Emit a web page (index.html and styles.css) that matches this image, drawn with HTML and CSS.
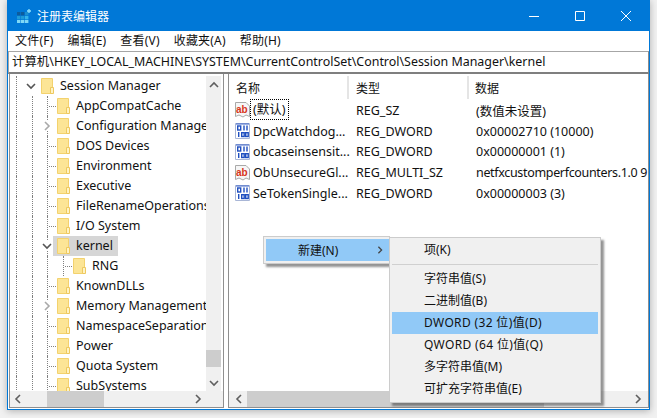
FILE: index.html
```html
<!DOCTYPE html>
<html lang="zh-CN">
<head>
<meta charset="utf-8">
<title>注册表编辑器</title>
<link rel="stylesheet" href="styles.css">
</head>
<body>
<svg class="defs" width="0" height="0" aria-hidden="true">
  <symbol id="folder" viewBox="0 0 13 16">
    <path d="M.5.5H11.5V15.5H.5Z" fill="#fce596" stroke="#f3d26e"/>
    <path d="M9.5 9.5H12.5V15.5H9.5Z" fill="#fff3c4" stroke="#eec95f"/>
  </symbol>
  <symbol id="ab" viewBox="0 0 15 16">
    <path d="M.5 .5H11L14.5 4V14.5L11 13L8 15L4 13L.5 14.5Z" fill="#f6f6f6" stroke="#a9a9a9"/>
    <text x="1" y="11" class="ab-text">ab</text>
  </symbol>
  <symbol id="bin" viewBox="0 0 15 16">
    <path d="M.5 .5H14.5V15.5H.5Z" fill="#fff" stroke="#a9b6d6"/>
    <path d="M1 1H14" stroke="#3a62c8"/>
    <g fill="none" stroke="#1f4fc0" stroke-width="1.4">
      <rect x="2.7" y="3" width="3" height="4"/>
      <path d="M9 2.5V7.5M12 2.5V7.5"/>
      <path d="M3.7 9V14"/>
      <rect x="6.7" y="9.7" width="2.5" height="3.8"/>
      <rect x="10.7" y="9.7" width="2.5" height="3.8"/>
    </g>
  </symbol>
  <symbol id="down" viewBox="0 0 10 10"><path d="M1 3L5 7L9 3" fill="none" stroke="currentColor" stroke-width="1.6"/></symbol>
  <symbol id="up" viewBox="0 0 10 10"><path d="M1 7L5 3L9 7" fill="none" stroke="currentColor" stroke-width="1.6"/></symbol>
  <symbol id="left" viewBox="0 0 10 10"><path d="M7 1L3 5L7 9" fill="none" stroke="currentColor" stroke-width="1.6"/></symbol>
  <symbol id="right" viewBox="0 0 10 10"><path d="M3 1L7 5L3 9" fill="none" stroke="currentColor" stroke-width="1.6"/></symbol>
</svg>

<div class="window">
  <header class="titlebar">
    <svg class="app-icon" width="14" height="14" viewBox="0 0 14 14">
      <rect x="0" y="3" width="3.4" height="3.4" fill="#0e5c9c"/><rect x="4" y="3" width="3.4" height="3.4" fill="#0e5c9c"/><rect x="8" y="3" width="3.4" height="3.4" fill="#1b8fd0"/>
      <rect x="0" y="7" width="3.4" height="3.4" fill="#1f9bd8"/><rect x="4" y="7" width="3.4" height="3.4" fill="#1f9bd8"/><rect x="8" y="7" width="3.4" height="3.4" fill="#34b4ea"/>
      <rect x="0" y="11" width="3.4" height="3" fill="#7fd8f6"/><rect x="4" y="11" width="3.4" height="3" fill="#7fd8f6"/><rect x="8" y="11" width="3.4" height="3" fill="#7fd8f6"/>
      <path d="M12 0V4M10 2H14" stroke="#8fe0fa" stroke-width="1.3"/>
    </svg>
    <span class="title">注册表编辑器</span>
    <div class="controls">
      <svg width="10" height="10" viewBox="0 0 10 10"><path d="M0 5.5H10" stroke="#fff"/></svg>
      <svg width="10" height="10" viewBox="0 0 10 10"><path d="M.5.5H9.5V9.5H.5Z" fill="none" stroke="#fff"/></svg>
      <svg width="10" height="10" viewBox="0 0 10 10"><path d="M0 0L10 10M10 0L0 10" stroke="#fff"/></svg>
    </div>
  </header>

  <nav class="menubar">
    <span>文件(F)</span><span>编辑(E)</span><span>查看(V)</span><span>收藏夹(A)</span><span>帮助(H)</span>
  </nav>

  <div class="address">计算机\HKEY_LOCAL_MACHINE\SYSTEM\CurrentControlSet\Control\Session Manager\kernel</div>

  <div class="panes">
    <section class="pane tree-pane">
      <div class="tree-main">
        <div class="tree-rows">
          <div class="row"><i class="g g-root"></i><svg class="chev dark"><use href="#down"/></svg><span class="node top"><svg class="fold"><use href="#folder"/></svg><span>Session Manager</span></span></div>
          <div class="row"><i class="g"></i><i class="g g2"></i><i class="g g3 stub"></i><span class="node"><svg class="fold"><use href="#folder"/></svg><span>AppCompatCache</span></span></div>
          <div class="row"><i class="g"></i><i class="g g2"></i><span class="ex"><svg class="chev light"><use href="#right"/></svg></span><span class="node"><svg class="fold"><use href="#folder"/></svg><span>Configuration Manager</span></span></div>
          <div class="row"><i class="g"></i><i class="g g2"></i><i class="g g3 stub"></i><span class="node"><svg class="fold"><use href="#folder"/></svg><span>DOS Devices</span></span></div>
          <div class="row"><i class="g"></i><i class="g g2"></i><i class="g g3 stub"></i><span class="node"><svg class="fold"><use href="#folder"/></svg><span>Environment</span></span></div>
          <div class="row"><i class="g"></i><i class="g g2"></i><i class="g g3 stub"></i><span class="node"><svg class="fold"><use href="#folder"/></svg><span>Executive</span></span></div>
          <div class="row"><i class="g"></i><i class="g g2"></i><i class="g g3 stub"></i><span class="node"><svg class="fold"><use href="#folder"/></svg><span>FileRenameOperations</span></span></div>
          <div class="row"><i class="g"></i><i class="g g2"></i><i class="g g3 stub"></i><span class="node"><svg class="fold"><use href="#folder"/></svg><span>I/O System</span></span></div>
          <div class="row"><i class="g"></i><i class="g g2"></i><span class="ex"><svg class="chev dark"><use href="#down"/></svg></span><span class="node selected"><svg class="fold"><use href="#folder"/></svg><span>kernel</span></span></div>
          <div class="row"><i class="g"></i><i class="g g2"></i><i class="g g3 wide"></i><i class="g g3 stub"></i><span class="node"><svg class="fold"><use href="#folder"/></svg><span>RNG</span></span></div>
          <div class="row"><i class="g"></i><i class="g g2"></i><i class="g g3 stub"></i><span class="node"><svg class="fold"><use href="#folder"/></svg><span>KnownDLLs</span></span></div>
          <div class="row"><i class="g"></i><i class="g g2"></i><span class="ex"><svg class="chev light"><use href="#right"/></svg></span><span class="node"><svg class="fold"><use href="#folder"/></svg><span>Memory Management</span></span></div>
          <div class="row"><i class="g"></i><i class="g g2"></i><i class="g g3 stub"></i><span class="node"><svg class="fold"><use href="#folder"/></svg><span>NamespaceSeparation</span></span></div>
          <div class="row"><i class="g"></i><i class="g g2"></i><i class="g g3 stub"></i><span class="node"><svg class="fold"><use href="#folder"/></svg><span>Power</span></span></div>
          <div class="row"><i class="g"></i><i class="g g2"></i><i class="g g3 stub"></i><span class="node"><svg class="fold"><use href="#folder"/></svg><span>Quota System</span></span></div>
          <div class="row"><i class="g"></i><i class="g g2"></i><i class="g g3 stub"></i><span class="node"><svg class="fold"><use href="#folder"/></svg><span>SubSystems</span></span></div>
        </div>
        <div class="vscroll">
          <svg class="arrow"><use href="#up"/></svg>
          <div class="vspace"><div class="vthumb"></div></div>
          <svg class="arrow"><use href="#down"/></svg>
        </div>
        <div class="tree-edge"></div>
      </div>
      <div class="hscroll tree-h">
        <svg class="arrow"><use href="#left"/></svg>
        <div class="hspace"><div class="hthumb"></div></div>
        <svg class="arrow"><use href="#right"/></svg>
      </div>
    </section>

    <section class="pane list-pane">
      <div class="list-main">
        <div class="list-head">
          <span class="c-name">名称</span><span class="c-type">类型</span><span class="c-data">数据</span>
        </div>
        <div class="list-row"><span class="c-name"><svg class="ico"><use href="#ab"/></svg><span class="focus">(默认)</span></span><span class="c-type">REG_SZ</span><span class="c-data">(数值未设置)</span></div>
        <div class="list-row"><span class="c-name"><svg class="ico"><use href="#bin"/></svg><span class="nm">DpcWatchdog...</span></span><span class="c-type">REG_DWORD</span><span class="c-data">0x00002710 (10000)</span></div>
        <div class="list-row"><span class="c-name"><svg class="ico"><use href="#bin"/></svg><span class="nm">obcaseinsensit...</span></span><span class="c-type">REG_DWORD</span><span class="c-data">0x00000001 (1)</span></div>
        <div class="list-row"><span class="c-name"><svg class="ico"><use href="#ab"/></svg><span class="nm">ObUnsecureGl...</span></span><span class="c-type">REG_MULTI_SZ</span><span class="c-data tight">netfxcustomperfcounters.1.0 9</span></div>
        <div class="list-row"><span class="c-name"><svg class="ico"><use href="#bin"/></svg><span class="nm">SeTokenSingle...</span></span><span class="c-type">REG_DWORD</span><span class="c-data">0x00000003 (3)</span></div>
      </div>
      <div class="hscroll list-h">
        <svg class="arrow"><use href="#left"/></svg>
        <div class="hspace"><div class="hthumb"></div></div>
        <svg class="arrow"><use href="#right"/></svg>
      </div>
    </section>
  </div>

  <div class="ctx ctx-main">
    <div class="ctx-new"><span>新建(N)</span><svg class="sub-arrow"><use href="#right"/></svg></div>
  </div>
  <div class="ctx ctx-sub">
    <div class="item">项(K)</div>
    <div class="sep"></div>
    <div class="item">字符串值(S)</div>
    <div class="item">二进制值(B)</div>
    <div class="item hot latin">DWORD (32 位)值(D)</div>
    <div class="item latin">QWORD (64 位)值(Q)</div>
    <div class="item">多字符串值(M)</div>
    <div class="item">可扩充字符串值(E)</div>
  </div>
</div>
</body>
</html>
```

FILE: styles.css
```css
* { box-sizing: border-box; }
html, body { margin: 0; height: 100%; overflow: hidden; }
body {
  background: #f1f1f1;
  font-family: "Noto Sans", "Noto Sans CJK SC", sans-serif;
  font-size: 12.5px;
  color: #111;
}
.defs { position: absolute; }
.ab-text { font: 700 10px "Liberation Sans", sans-serif; fill: #d8341a; }

.window {
  position: relative;
  margin-left: 7px;
  width: 643px;
  height: 410px;
  background: #fff;
  border: 1px solid #0078d7;
  border-top: 0;
  display: flex;
  flex-direction: column;
  box-shadow: 0 1px 7px rgba(0,0,0,.28);
}

.titlebar {
  height: 31px;
  background: #0078d7;
  display: flex;
  align-items: center;
  padding-left: 9px;
  color: #fff;
  flex: none;
}
.app-icon { flex: none; margin-top: 1px; }
.title { margin-left: 6px; font-size: 12px; font-family: "Noto Sans CJK SC", sans-serif; line-height: 1; }
.controls { margin-left: auto; margin-right: 18px; display: flex; gap: 36px; }
.controls svg { display: block; }

.menubar {
  height: 20px;
  flex: none;
  display: flex;
  gap: 14px;
  align-items: center;
  padding-left: 7px;
  font-size: 12px;
  letter-spacing: .2px;
  line-height: 1;
}

.address {
  height: 23px;
  flex: none;
  border: 1px solid #a6a6a6;
  border-bottom: 2px solid #7f7f7f;
  border-right-color: #8c8c8c;
  padding-left: 3px;
  line-height: 20px;
  font-size: 12.43px;
  white-space: nowrap;
}

.panes {
  flex: 1;
  min-height: 0;
  display: flex;
  gap: 4px;
  padding: 0 0 1px 1px;
}
.pane {
  display: flex;
  flex-direction: column;
  border-left: 1px solid #8f8f8f;
  border-bottom: 1px solid #8f8f8f;
  min-height: 0;
}
.tree-pane { width: 215px; border-right: 1px solid #8f8f8f; flex: none; }
.list-pane { flex: 1; min-width: 0; border-right: 1px solid #8f8f8f; position: relative; }

.tree-main { flex: 1; min-height: 0; display: flex; padding-top: 2px; }
.tree-rows { width: 196px; overflow: hidden; flex: none; }
.row {
  height: 20px;
  display: flex;
  align-items: stretch;
  padding-left: 6px;
  white-space: nowrap;
}
.g { display: block; flex: none; width: 16px; height: 20px; border-left: 1px dotted #808080; }
.g-root { width: 10px; }
.g2 { width: 15px; }
.g3 { width: 6px; }
.g3.wide { width: 16px; }
.stub { position: relative; }
.stub::after {
  content: "";
  position: absolute;
  top: 10px;
  left: 1px;
  width: 7px;
  border-top: 1px dotted #808080;
}
.ex { flex: none; width: 6px; position: relative; border-left: 1px dotted #808080; }
.ex .chev { position: absolute; left: -6px; top: 5px; background: #fff; }
.chev { width: 10px; height: 10px; flex: none; align-self: center; }
.chev.dark { color: #555; }
.chev.light { color: #a9a9a9; }
.node {
  display: flex;
  align-items: center;
  flex: none;
  padding-left: 4px;
  padding-right: 5px;
  height: 20px;
}
.node > span { margin-top: -2px; }
.node.top { margin-left: 1px; }
.node.selected { background: #d6d6d6; }
.fold { width: 13px; height: 16px; margin-right: 6px; flex: none; }

.vscroll {
  width: 15px;
  flex: none;
  background: #f0f0f0;
  display: flex;
  flex-direction: column;
  align-items: center;
  padding: 4px 0 3px;
  color: #5f5f5f;
}
.vspace { flex: 1; width: 100%; position: relative; }
.vthumb { position: absolute; left: 0; right: 0; bottom: 11px; height: 17px; background: #cdcdcd; }
.tree-edge { flex: 1; background: #fff; }
.arrow { width: 10px; height: 10px; flex: none; }

.hscroll {
  height: 16px;
  flex: none;
  background: #f0f0f0;
  display: flex;
  align-items: center;
  color: #5f5f5f;
}
.hspace { flex: 1; height: 100%; }
.hthumb { height: 100%; background: #cdcdcd; }
.tree-h { padding: 0 20px 0 3px; }
.tree-h .hspace { padding-left: 24px; padding-right: 89px; }
.list-h { padding: 0 5px 0 5px; }
.list-h .hspace { padding-left: 3px; padding-right: 89px; }

.list-main { flex: 1; min-height: 0; padding-top: 2px; overflow: hidden; }
.list-head {
  height: 23px;
  margin-bottom: 1px;
  display: flex;
  align-items: center;
  font-size: 12px;
}
.list-head .c-name, .list-head .c-type, .list-head .c-data { height: 100%; display: flex; align-items: center; }
.list-head .c-name { width: 120px; padding-left: 7px; border-right: 2px solid #e5e5e5; }
.list-head .c-type { width: 120px; padding-left: 7px; border-right: 2px solid #e5e5e5; }
.list-head .c-data { padding-left: 6px; }

.list-row {
  height: 20.75px;
  display: flex;
  align-items: center;
  white-space: nowrap;
}
.list-row .c-name { width: 121px; padding-left: 6px; display: flex; align-items: center; flex: none; }
.list-row .c-type { width: 120px; padding-left: 6px; flex: none; }
.list-row .c-data { padding-left: 6px; flex: none; }
.list-row .c-data.tight { letter-spacing: -.33px; }
.ico { width: 15px; height: 16px; flex: none; }
.nm { margin-left: 3px; }
.focus { margin: -2px 0 0 1px; padding: 0 2px; line-height: 19px; outline: 1px dotted #000; }

.ctx {
  position: absolute;
  background: #f0f0f0;
  border: 1px solid #ccc;
  box-shadow: 3px 3px 2px rgba(60,60,60,.55);
  font-size: 12px;
}
.ctx-main { left: 255px; top: 236px; width: 127px; height: 28px; padding: 2px; }
.ctx-new {
  height: 22px;
  background: #91c9f7;
  display: flex;
  align-items: center;
  padding-left: 32px;
  position: relative;
  width: 124px;
}
.sub-arrow { position: absolute; left: 110px; top: 7px; width: 8px; height: 8px; color: #444; }
.ctx-sub { left: 381px; top: 237px; width: 212px; height: 166px; padding: 1px 2px 2px; }
.item { height: 22px; line-height: 22px; padding-left: 32px; white-space: nowrap; }
.item.latin { letter-spacing: .35px; }
.item.hot { background: #91c9f7; }
.sep { height: 1px; background: #d0d0d0; margin: 3px 0; }
```
